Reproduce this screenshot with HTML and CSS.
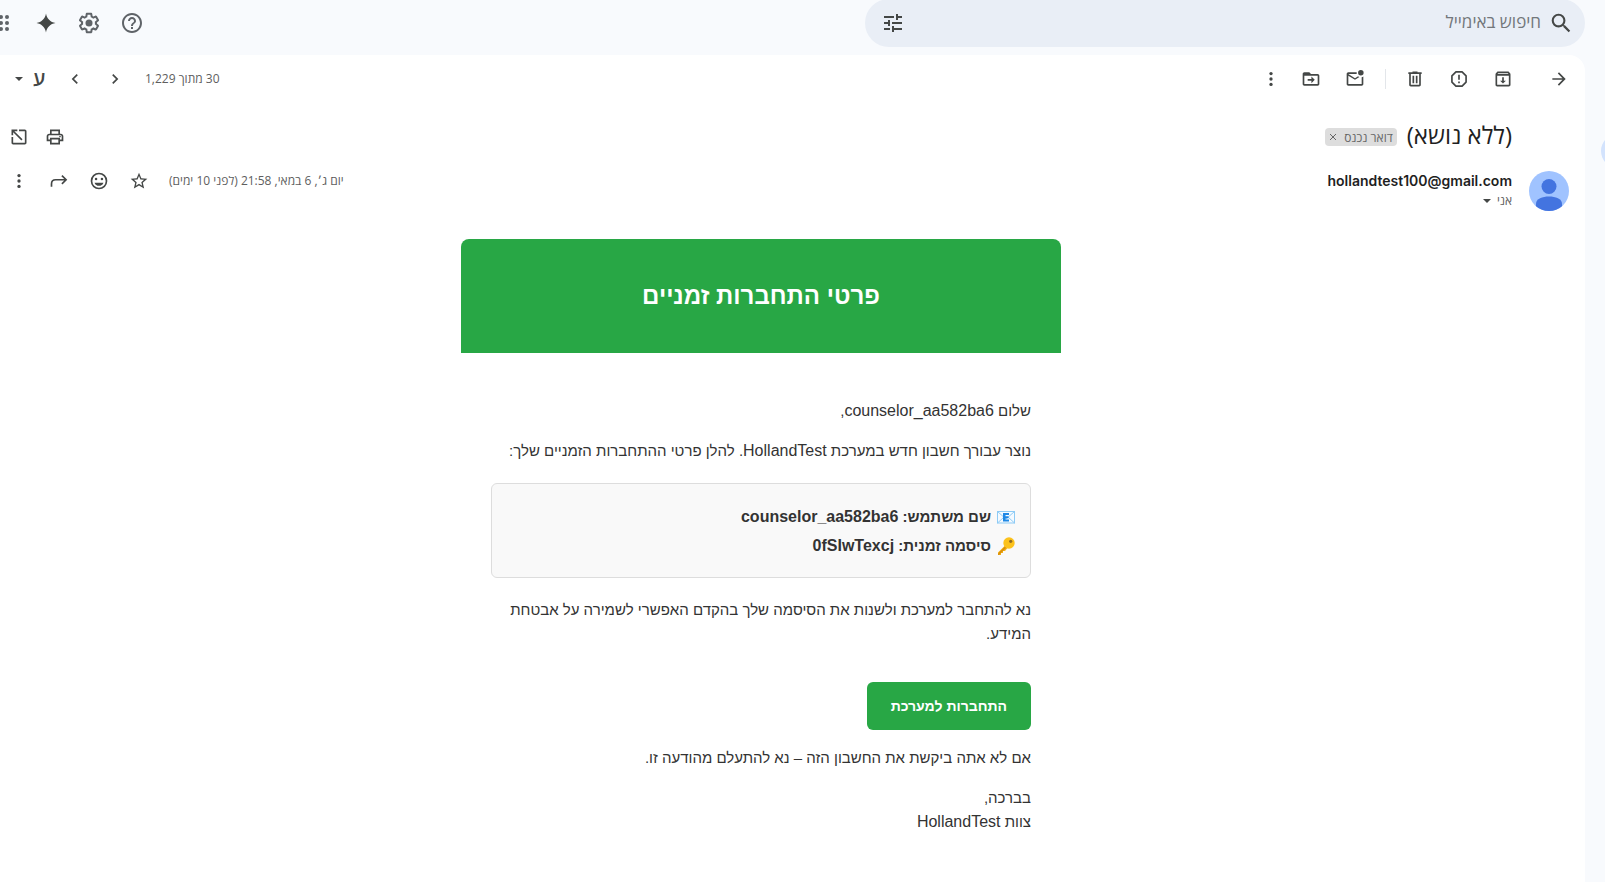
FILE: index.html
```
<!DOCTYPE html>
<html lang="he" dir="rtl">
<head>
<meta charset="utf-8">
<title>(ללא נושא)</title>
<link rel="stylesheet" href="styles.css">
</head>
<body>
<div class="app">
  <aside class="rail"><span class="rail-active"></span></aside>
  <div class="content">
    <header class="topbar">
      <form class="search" role="search">
        <button class="icon-btn search-btn" type="button" aria-label="חיפוש"><svg class="icon-lg" viewBox="0 0 24 24"><path d="M15.5 14h-.79l-.28-.27A6.47 6.47 0 0 0 16 9.5 6.5 6.5 0 1 0 9.5 16c1.61 0 3.09-.59 4.23-1.57l.27.28v.79l5 4.99L20.49 19l-4.99-5zm-6 0C7.01 14 5 11.99 5 9.5S7.01 5 9.5 5 14 7.01 14 9.5 11.99 14 9.5 14z" transform="translate(-.5 -.5) scale(1.06)"/></svg></button>
        <input class="search-input" type="text" placeholder="חיפוש באימייל" aria-label="חיפוש באימייל">
        <button class="icon-btn tune-btn" type="button" aria-label="אפשרויות חיפוש"><svg class="icon-lg" viewBox="0 0 24 24"><path d="M3 17v2h6v-2H3zM3 5v2h10V5H3zm10 16v-2h8v-2h-8v-2h-2v6h2zM7 9v2H3v2h4v2h2V9H7zm14 4v-2H11v2h10zm-6-4h2V7h4V5h-4V3h-2v6z"/></svg></button>
      </form>
      <nav class="top-actions">
        <button class="icon-btn top-btn" type="button" aria-label="תמיכה"><svg class="icon-lg soft" viewBox="0 0 24 24"><path d="M11 18h2v-2h-2v2zm1-16C6.48 2 2 6.48 2 12s4.48 10 10 10 10-4.480 10-10S17.520 2 12 2zm0 18c-4.410 0-8-3.590-8-8s3.590-8 8-8 8 3.590 8 8-3.590 8-8 8zm0-14c-2.210 0-4 1.790-4 4h2c0-1.100.9-2 2-2s2 .9 2 2c0 2-3 1.750-3 5h2c0-2.250 3-2.500 3-5 0-2.210-1.790-4-4-4z"/></svg></button>
        <button class="icon-btn top-btn" type="button" aria-label="הגדרות"><svg class="icon-lg soft" viewBox="0 0 24 24"><path d="M13.850 22.250h-3.700c-.74 0-1.360-.54-1.450-1.270l-.27-1.890c-.27-.14-.53-.29-.79-.46l-1.800.72c-.7.260-1.470-.03-1.810-.65L2.200 15.530c-.35-.66-.2-1.440.36-1.880l1.530-1.190c-.01-.15-.02-.3-.02-.46 0-.15.010-.31.020-.46l-1.520-1.190c-.59-.45-.74-1.260-.37-1.880l1.850-3.190c.34-.62 1.110-.9 1.790-.63l1.810.73c.26-.17.520-.32.780-.46l.27-1.910c.09-.7.710-1.250 1.440-1.250h3.700c.74 0 1.360.54 1.450 1.270l.27 1.890c.27.140.53.290.79.460l1.800-.72c.71-.26 1.480.03 1.820.650l1.840 3.180c.36.660.2 1.440-.36 1.880l-1.520 1.190c.010.150.020.3.020.460s-.01.310-.02.460l1.520 1.190c.56.450.72 1.230.370 1.860l-1.860 3.220c-.34.620-1.110.9-1.800.630l-1.800-.72c-.26.170-.52.320-.78.460l-.27 1.910c-.1.680-.72 1.220-1.460 1.220zm-3.230-2h2.760l.37-2.550.53-.22c.44-.18.88-.44 1.340-.78l.45-.34 2.380.96 1.380-2.400-2.030-1.580.070-.56c.03-.26.060-.51.060-.78s-.03-.53-.06-.78l-.07-.56 2.030-1.580-1.390-2.400-2.390.96-.45-.35c-.42-.32-.87-.58-1.330-.77l-.52-.22-.37-2.550h-2.760l-.37 2.550-.53.210c-.44.190-.88.440-1.340.79l-.45.330-2.380-.95-1.390 2.390 2.030 1.580-.07.560a7 7 0 0 0-.06.790c0 .26.020.530.060.780l.07.560-2.030 1.580 1.380 2.400 2.390-.96.450.35c.43.330.86.580 1.330.77l.53.220.38 2.550z"/><circle cx="12" cy="12" r="3.500"/></svg></button>
        <button class="icon-btn top-btn" type="button" aria-label="Gemini"><svg class="icon-lg" viewBox="0 0 24 24"><path d="M12 2.500c.7 5 4.500 8.800 9.500 9.500-5 .7-8.800 4.500-9.500 9.500-.7-5-4.500-8.800-9.500-9.500 5-.7 8.800-4.500 9.500-9.500z"/></svg></button>
        <button class="icon-btn apps-btn" type="button" aria-label="אפליקציות"><svg class="icon-lg soft" viewBox="0 0 24 24"><g><circle cx="6" cy="6" r="2"/><circle cx="12" cy="6" r="2"/><circle cx="18" cy="6" r="2"/><circle cx="6" cy="12" r="2"/><circle cx="12" cy="12" r="2"/><circle cx="18" cy="12" r="2"/><circle cx="6" cy="18" r="2"/><circle cx="12" cy="18" r="2"/><circle cx="18" cy="18" r="2"/></g></svg></button>
      </nav>
    </header>

    <main class="card">
      <div class="toolbar">
        <div class="tools">
          <button class="icon-btn tool back" type="button" aria-label="חזרה"><svg class="icon" viewBox="0 0 24 24"><path d="M12 4l-1.410 1.410L16.170 11H4v2h12.170l-5.580 5.590L12 20l8-8z"/></svg></button>
          <button class="icon-btn tool" type="button" aria-label="ארכיון"><svg class="icon" viewBox="0 0 24 24"><path d="M20.540 5.230l-1.390-1.680C18.880 3.210 18.470 3 18 3H6c-.47 0-.88.210-1.160.55L3.460 5.230C3.170 5.570 3 6.020 3 6.500V19c0 1.100.9 2 2 2h14c1.100 0 2-.9 2-2V6.500c0-.48-.17-.93-.46-1.270zM6.240 5h11.520l.83 1H5.420l.82-1zM5 19V8h14v11H5zm6-9h2v4h2.500L12 17.500 8.500 14H11z"/></svg></button>
          <button class="icon-btn tool" type="button" aria-label="דיווח על ספאם"><svg class="icon" viewBox="0 0 24 24"><path class="line" d="M8.300 3.500h7.400l4.800 4.800v7.400l-4.800 4.800H8.300l-4.800-4.800V8.300z" stroke-linejoin="round"/><path d="M11 7h2v6h-2zM11 15h2v2h-2z"/></svg></button>
          <button class="icon-btn tool" type="button" aria-label="מחיקה"><svg class="icon" viewBox="0 0 24 24"><path d="M15 4V3H9v1H4v2h1v13c0 1.100.9 2 2 2h10c1.100 0 2-.9 2-2V6h1V4h-5zm2 15H7V6h10v13zM9 8h2v9H9zm4 0h2v9h-2z"/></svg></button>
          <span class="divider"></span>
          <button class="icon-btn tool" type="button" aria-label="סימון כלא נקרא"><svg class="icon" viewBox="0 0 24 24"><path d="M22 8.980V18c0 1.100-.9 2-2 2H4c-1.100 0-2-.9-2-2V6c0-1.100.9-2 2-2h10.100c-.1.320-.1.660-.1 1s0 .68.100 1H4l8 5 3.670-2.290c.47.430 1.020.76 1.630.98L12 13 4 8v10h16V9.900c.74-.15 1.420-.48 2-.92z"/><circle cx="19" cy="4.500" r="3.300"/></svg></button>
          <button class="icon-btn tool" type="button" aria-label="העברה אל"><svg class="icon" viewBox="0 0 24 24"><path d="M20 6h-8l-2-2H4c-1.100 0-2 .9-2 2v12c0 1.100.9 2 2 2h16c1.100 0 2-.9 2-2V8c0-1.100-.9-2-2-2zm0 12H4V8h16v10zm-7.500-1v-3H8v-2h4.500V9l4 4z"/></svg></button>
          <button class="icon-btn tool more" type="button" aria-label="עוד"><svg class="icon" viewBox="0 0 24 24"><circle cx="12" cy="5.500" r="2"/><circle cx="12" cy="12" r="2"/><circle cx="12" cy="18.500" r="2"/></svg></button>
        </div>
        <div class="pager">
          <span class="small">30 מתוך 1,229</span>
          <span class="pager-nav">
            <button class="icon-btn act" type="button" aria-label="חדש יותר"><svg class="icon" viewBox="0 0 24 24"><path d="M10 6L8.590 7.410 13.170 12l-4.580 4.590L10 18l6-6z"/></svg></button>
            <button class="icon-btn act" type="button" aria-label="ישן יותר"><svg class="icon" viewBox="0 0 24 24"><path d="M15.410 7.410L14 6l-6 6 6 6 1.410-1.410L10.830 12z"/></svg></button>
          </span>
          <button class="icon-btn lang" type="button" aria-label="כלי קלט"><span class="lang-letter">ע</span><svg class="caret" viewBox="0 0 8 4"><path d="M0 0h8L4 4z"/></svg></button>
        </div>
      </div>

      <div class="subject-row">
        <div class="subject-group">
          <h1 class="subject">(ללא נושא)</h1>
          <span class="chip">דואר נכנס<button class="icon-btn chip-x" type="button" aria-label="הסרת התווית"><svg class="x-icon" viewBox="0 0 8 8"><path class="thin" d="M1 1l6 6M7 1L1 7"/></svg></button></span>
        </div>
        <div class="subject-actions">
          <button class="icon-btn act36" type="button" aria-label="הדפסה"><svg class="icon" viewBox="0 0 24 24"><path d="M19 8h-1V3H6v5H5c-1.660 0-3 1.340-3 3v6h4v4h12v-4h4v-6c0-1.660-1.340-3-3-3zM8 5h8v3H8V5zm8 14H8v-4h8v4zm2-4v-2H6v2H4v-4c0-.55.45-1 1-1h14c.55 0 1 .45 1 1v4h-2z"/><circle cx="18" cy="11.500" r="1"/></svg></button>
          <button class="icon-btn act36" type="button" aria-label="פתיחה בחלון חדש"><svg class="icon" viewBox="0 0 24 24"><path d="M12 3h7c1.100 0 2 .9 2 2v14c0 1.100-.9 2-2 2H5c-1.100 0-2-.9-2-2v-7h2v7h14V5h-7zM3 3h7v2H6.410l9.830 9.830-1.410 1.410L5 6.410V10H3z"/></svg></button>
        </div>
      </div>

      <div class="sender-row">
        <svg class="avatar" viewBox="0 0 40 40"><circle cx="20" cy="20" r="20" fill="#a0c3ff"/><circle cx="20" cy="15.500" r="7.500" fill="#4374e0"/><path d="M7 35.200v-2.700C7 28 13.500 25.500 20 25.500S33 28 33 32.500v2.700A20 20 0 0 1 7 35.200z" fill="#4374e0"/></svg>
        <div class="sender">
          <span class="email">hollandtest100@gmail.com</span>
          <button class="icon-btn to small" type="button">אני<svg class="caret" viewBox="0 0 8 4"><path d="M0 0h8L4 4z"/></svg></button>
        </div>
        <div class="meta">
          <span class="small date">יום ג׳, 6 במאי, 21:58 (לפני 10 ימים)</span>
          <button class="icon-btn act" type="button" aria-label="סימון בכוכב"><svg class="icon" viewBox="0 0 24 24"><path d="M22 9.240l-7.190-.62L12 2 9.190 8.630 2 9.240l5.460 4.730L5.820 21 12 17.270 18.180 21l-1.630-7.030L22 9.240zM12 15.400l-3.760 2.270 1-4.280-3.320-2.880 4.380-.38L12 6.100l1.710 4.040 4.380.38-3.320 2.880 1 4.280L12 15.400z"/></svg></button>
          <button class="icon-btn act" type="button" aria-label="תגובה באמוג׳י"><svg class="icon" viewBox="0 0 24 24"><circle class="line" cx="12" cy="12" r="9"/><circle cx="8.500" cy="9.500" r="1.500"/><circle cx="15.500" cy="9.500" r="1.500"/><path d="M6.700 14h10.600a5.600 5.600 0 0 1-10.600 0z"/></svg></button>
          <button class="icon-btn act" type="button" aria-label="תשובה"><svg class="icon" viewBox="0 0 24 24"><path class="line" d="M3 19v-3.500C3 12.500 5 10.500 8 10.500h12M15.500 5.500l5 5-5 5"/></svg></button>
          <button class="icon-btn act" type="button" aria-label="עוד"><svg class="icon" viewBox="0 0 24 24"><circle cx="12" cy="5.500" r="2"/><circle cx="12" cy="12" r="2"/><circle cx="12" cy="18.500" r="2"/></svg></button>
        </div>
      </div>

      <div class="message">
        <article class="mail">
          <h2 class="mail-head">פרטי התחברות זמניים</h2>
          <div class="mail-body">
            <p>שלום <span class="latin">counselor_aa582ba6</span>,</p>
            <p>נוצר עבורך חשבון חדש במערכת <span class="latin">HollandTest</span>. להלן פרטי ההתחברות הזמניים שלך:</p>
            <div class="creds">
              <div class="cred"><svg class="emoji" viewBox="0 0 18 18"><rect x=".5" y="3.500" width="17" height="11.500" fill="#f4faff" stroke="#8ecbf5"/><path d="M.5 3.500L9 11l8.500-7.500M.5 15L7 9m10.500 6L11 9" fill="none" stroke="#8ecbf5"/><path d="M6 5h6v2H8.500v1.200h3v2h-3v1.300H12v2H6z" fill="#1e88e5"/></svg><span>שם משתמש: <span class="latin">counselor_aa582ba6</span></span></div>
              <div class="cred"><svg class="emoji" viewBox="0 0 18 18"><path d="M8.500 8L1 15.500V18h3v-2h2v-2h2l3-3.500z" fill="#f5b416"/><path d="M8.500 9L1 16.500V18h1l8-8z" fill="#d98f0c"/><circle cx="12" cy="6" r="5.700" fill="#fcc21b"/><circle cx="13.700" cy="4.300" r="1.600" fill="#8f6a24"/></svg><span>סיסמה זמנית: <span class="latin">0fSIwTexcj</span></span></div>
            </div>
            <p>נא להתחבר למערכת ולשנות את הסיסמה שלך בהקדם האפשרי לשמירה על אבטחת המידע.</p>
            <a class="cta" href="#">התחברות למערכת</a>
            <p>אם לא אתה ביקשת את החשבון הזה – נא להתעלם מהודעה זו.</p>
            <p>בברכה,<br>צוות <span class="latin">HollandTest</span></p>
          </div>
        </article>
      </div>
    </main>
  </div>
</div>
</body>
</html>
```
FILE: styles.css
```
* { box-sizing: border-box; }
body {
  margin: 0;
  background: #f8fafd;
  color: #1f1f1f;
  font-family: "Open Sans", "Liberation Sans", sans-serif;
}
.app { display: flex; min-height: 100vh; overflow: hidden; }
.rail { flex: none; width: 20px; padding-top: 134px; overflow: hidden; }
.rail-active {
  display: block;
  width: 34px;
  height: 34px;
  margin-right: -30px;
  border-radius: 17px;
  background: #d3e3fd;
}
.content { flex: 1; min-width: 0; display: flex; flex-direction: column; }

.icon-btn {
  display: flex;
  align-items: center;
  justify-content: center;
  flex: none;
  margin: 0;
  padding: 0;
  border: 0;
  background: none;
  color: inherit;
  font: inherit;
}
svg { display: block; flex: none; fill: #444746; }
.icon-lg { width: 24px; height: 24px; }
.soft { fill: #5f6368; }
.icon { width: 20px; height: 20px; }
.line { fill: none; stroke: #444746; stroke-width: 2; }
.thin { fill: none; stroke: #666; stroke-width: 1; }
.caret { width: 8px; height: 4px; }

.topbar {
  display: flex;
  justify-content: space-between;
  align-items: flex-start;
  height: 47px;
  margin-bottom: 8px;
}
.search {
  display: flex;
  align-items: center;
  width: 720px;
  height: 48px;
  margin-top: -1px;
  padding: 0 12px 0 16px;
  border-radius: 24px;
  background: #e9eef6;
}
.search-input {
  flex: 1;
  min-width: 0;
  margin: 0;
  padding: 0 8px 2px;
  border: 0;
  outline: 0;
  background: none;
  font: 17px/24px "Open Sans", "Liberation Sans", sans-serif;
}
.search-input::placeholder { color: #73777b; opacity: 1; }
.top-actions { display: flex; align-items: center; height: 46px; }
.top-btn { width: 43px; }
.apps-btn { width: 24px; margin-right: 11px; margin-left: -11px; }

.card {
  flex: 1;
  background: #fff;
  border-radius: 0 16px 0 0;
}
.toolbar, .subject-row, .sender-row {
  display: flex;
  justify-content: space-between;
}
.toolbar { align-items: center; height: 48px; padding-right: 4px; }
.tools, .pager, .pager-nav { display: flex; align-items: center; }
.tool { width: 44px; }
.back { margin-left: 12px; }
.more { width: 36px; }
.divider { width: 1px; height: 20px; margin: 0 7px 0 8px; background: #e3e6ea; }
.small { font-size: 12px; line-height: 20px; color: #5e5e5e; }
.pager-nav { margin-right: 10px; }
.lang { gap: 10px; width: 55px; padding-right: 8px; padding-left: 13px; }
.lang-letter { font-size: 20px; font-weight: 600; line-height: 24px; color: #444746; }

.subject-row { align-items: center; height: 48px; margin-top: 10px; padding: 0 73px 0 1px; }
.subject-group { display: flex; align-items: center; gap: 10px; }
.subject { margin: 0; padding-bottom: 4px; font-size: 24px; font-weight: 400; line-height: 28px; }
.chip {
  display: flex;
  align-items: center;
  gap: 7px;
  height: 18px;
  padding: 0 4px;
  border-radius: 4px;
  background: #ddd;
  color: #666;
  font-size: 12px;
}
.x-icon { width: 8px; height: 8px; }
.subject-actions { display: flex; }
.act36 { width: 36px; }

.sender-row { justify-content: flex-start; margin-top: 10px; padding-right: 16px; }
.avatar { width: 40px; height: 40px; }
.sender { display: flex; flex-direction: column; align-items: flex-start; margin-right: 17px; }
.email { font: 600 14px/20px Inter, "Open Sans", sans-serif; }
.to { gap: 6px; }
.meta { display: flex; align-items: center; height: 20px; margin-right: auto; margin-left: -1px; }
.act { width: 40px; }
.date { margin-left: 10px; }

.message { padding: 28px 73px 0 10px; }
.mail {
  max-width: 600px;
  margin: 0 auto;
  color: #333;
  font: 15px/24px "Liberation Sans", Arial, sans-serif;
}
.latin { font-size: 16px; }
.mail-head {
  margin: 0;
  padding: 39px 30px;
  border-radius: 8px 8px 0 0;
  background: #28a745;
  color: #fff;
  font-size: 24px;
  line-height: 36px;
  text-align: center;
}
.mail-body { padding: 46px 30px 32px; }
.mail-body p { margin: 0 0 16px; }
.mail-body .creds {
  margin: 20px 0;
  padding: 18px 15px 17px;
  border: 1px solid #ddd;
  border-radius: 6px;
  background: #f9f9f9;
  font-weight: 700;
  line-height: 29px;
}
.cred { display: flex; align-items: center; gap: 6px; }
.emoji { width: 18px; height: 18px; }
.cta {
  display: block;
  width: fit-content;
  margin: 36px 0 16px;
  padding: 12px 24px;
  border-radius: 6px;
  background: #28a745;
  color: #fff;
  font-size: 14px;
  font-weight: 700;
  text-decoration: none;
}
```
